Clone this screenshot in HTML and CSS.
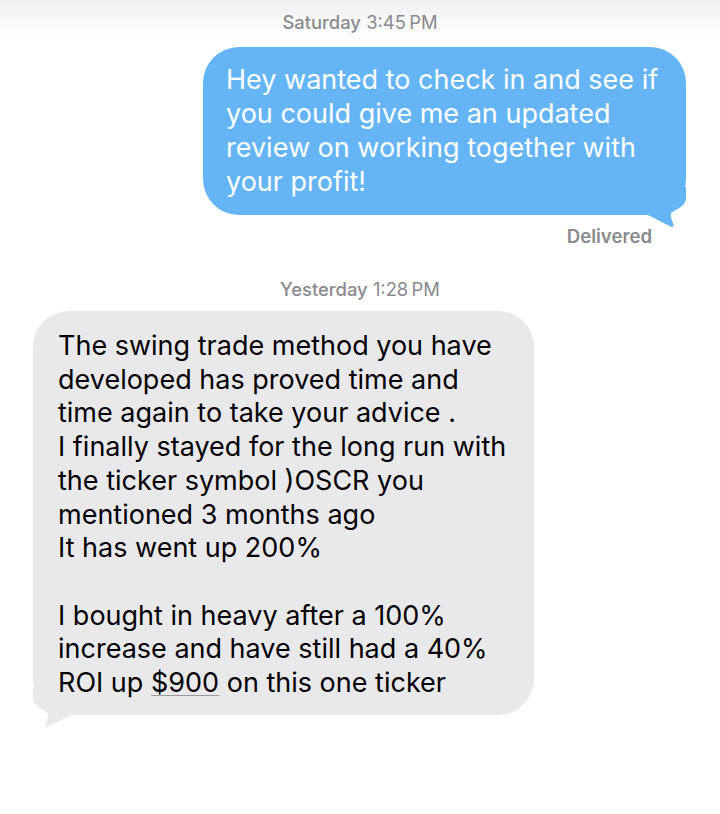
FILE: index.html
```html
<!DOCTYPE html>
<html lang="en">
<head>
  <meta charset="UTF-8">
  <meta name="viewport" content="width=device-width, initial-scale=1.0">
  <title>Messages</title>
  <link rel="stylesheet" href="styles.css">
</head>
<body>
  <div class="thread">
    <div class="stamp"><b>Saturday</b> 3:45&#8239;PM</div>

    <div class="bubble sent">
      Hey wanted to check in and see if you could give me an updated review on working together with your profit!
      <svg class="tail" width="40" height="42" viewBox="0 0 40 42"><path d="M0 0H40V11C40 19 31 22 25 26C24 31 27 35 27.5 38C28 40 26 40.5 24.5 39.5L2 28H0Z"/></svg>
    </div>
    <div class="status">Delivered</div>

    <div class="stamp"><b>Yesterday</b> 1:28&#8239;PM</div>

    <div class="bubble received">
      The swing trade method you have developed has proved time and time again to take your advice .<br>
      I finally stayed for the long run with the ticker symbol )OSCR you mentioned 3 months ago<br>
      It has went up 200%<br>
      <br>
      I bought in heavy after a 100% increase and have still had a 40% ROI up <span class="link">$900</span> on this one ticker
      <svg class="tail" width="40" height="42" viewBox="0 0 40 42"><path d="M0 0H40V11C40 19 31 22 25 26C24 31 27 35 27.5 38C28 40 26 40.5 24.5 39.5L2 28H0Z"/></svg>
    </div>
  </div>
</body>
</html>
```

FILE: styles.css
```css
html { background: #fff; }
body { margin: 0; min-height: 814px; background: linear-gradient(#f0f0f0, #fff 40px) no-repeat; font-family: Inter, 'Liberation Sans', sans-serif; color: #000; }
.thread { width: 720px; display: flex; flex-direction: column; }
.stamp { text-align: center; font-size: 18.4px; line-height: 22px; color: #8a8a8e; margin-top: 11px; }
.stamp b { font-weight: 500; }
.stamp + .bubble { margin-top: 14px; }
.bubble { position: relative; z-index: 0; font-size: 27px; line-height: 33.7px; border-radius: 36px; box-sizing: border-box; }
.bubble .tail { position: absolute; z-index: -1; }
.sent { align-self: flex-end; width: 483px; margin-right: 34px; padding: 16px 20px 16px 23px; background: #65b5f6; color: #fff; line-height: 34px; }
.sent .tail { right: 0; bottom: -14px; fill: #65b5f6; }
.received { align-self: flex-start; width: 501px; margin-left: 33px; padding: 18px 20px 15px 25px; background: #e9e9eb; }
.received .tail { left: 0; bottom: -14px; fill: #e9e9eb; transform: scaleX(-1); }
.status { align-self: flex-end; margin: 10px 68px 0 0; font-size: 18.6px; line-height: 22px; font-weight: 600; color: #8a8a8e; }
.status + .stamp { margin-top: 31px; }
.stamp + .received { margin-top: 11px; }
.link { text-decoration: underline; text-decoration-color: #9a9a9e; text-decoration-thickness: 1px; text-underline-offset: 3px; }
```
